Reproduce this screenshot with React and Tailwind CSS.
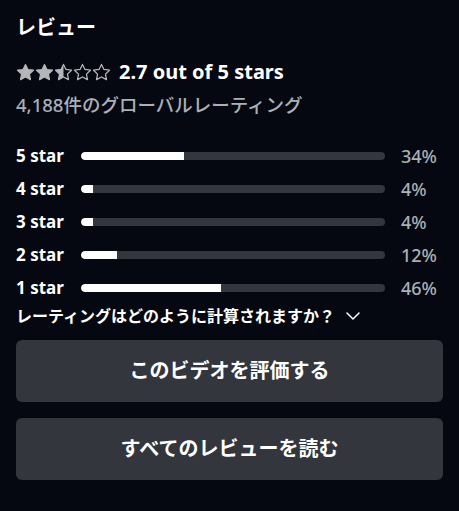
import { ChevronDown } from 'lucide-react';

const rows = [
  { label: '5 star', pct: 34 },
  { label: '4 star', pct: 4 },
  { label: '3 star', pct: 4 },
  { label: '2 star', pct: 12 },
  { label: '1 star', pct: 46 },
];

const STAR = 'M12 1.8l3.1 6.4 7 .9-5.1 4.9 1.3 7L12 17.6 5.7 21l1.3-7L1.9 9.1l7-.9z';

function Star({ fill }) {
  // fill: 'full' | 'half' | 'empty'
  const id = 'half-clip';
  return (
    <svg width="19" height="19" viewBox="0 0 24 24" className="shrink-0">
      {fill === 'half' && (
        <defs>
          <clipPath id={id}>
            <rect x="0" y="0" width="12" height="24" />
          </clipPath>
        </defs>
      )}
      {fill === 'full' && <path d={STAR} fill="#b4b6b9" stroke="#b4b6b9" strokeWidth="1.5" strokeLinejoin="round" />}
      {fill === 'half' && <path d={STAR} fill="#b4b6b9" clipPath={`url(#${id})`} />}
      {fill !== 'full' && <path d={STAR} fill="none" stroke="#b4b6b9" strokeWidth="1.6" strokeLinejoin="round" />}
    </svg>
  );
}

export default function App() {
  return (
    <div
      className="w-[459px] h-[511px] bg-[#050810] text-white px-4 pt-[14px]"
      style={{ fontFamily: '"Noto Sans", "Noto Sans CJK JP", sans-serif' }}
    >
      <h2 className="text-[20px] font-bold leading-[28px]">レビュー</h2>

      {/* Stars */}
      <div className="flex items-center mt-[17px] h-[26px]">
        <div className="flex items-center">
          <Star fill="full" />
          <Star fill="full" />
          <Star fill="half" />
          <Star fill="empty" />
          <Star fill="empty" />
        </div>
        <span className="ml-[8px] text-[20px] font-bold">2.7 out of 5 stars</span>
      </div>
      <div className="mt-[7px] text-[18.5px] font-medium text-[#aab0b6] leading-[26px]">4,188件のグローバルレーティング</div>

      {/* Histogram */}
      <div className="mt-[25px] flex flex-col gap-[7px]">
        {rows.map((r) => (
          <div key={r.label} className="flex items-center h-[26px]">
            <span className="w-[65px] text-[17px] font-bold">{r.label}</span>
            <div className="w-[304px] h-[8px] rounded-full bg-[#33363d] overflow-hidden">
              <div className="h-full bg-white rounded-l-full" style={{ width: `${Math.max(r.pct, 4)}%` }} />
            </div>
            <span className="ml-[16px] text-[18px] font-medium text-[#aab0b6]">{r.pct}%</span>
          </div>
        ))}
      </div>

      <button className="mt-[4px] h-[22px] flex items-center text-[16px] font-bold leading-[22px]">
        レーティングはどのように計算されますか？
        <ChevronDown size={24} strokeWidth={1.5} className="ml-[6px]" />
      </button>

      <div className="mt-[13px] flex flex-col gap-[16px]">
        <button className="h-[62px] w-full rounded-[6px] bg-[#33363d] text-[20px] font-bold">このビデオを評価する</button>
        <button className="h-[62px] w-full rounded-[6px] bg-[#33363d] text-[20px] font-bold">すべてのレビューを読む</button>
      </div>
    </div>
  );
}
